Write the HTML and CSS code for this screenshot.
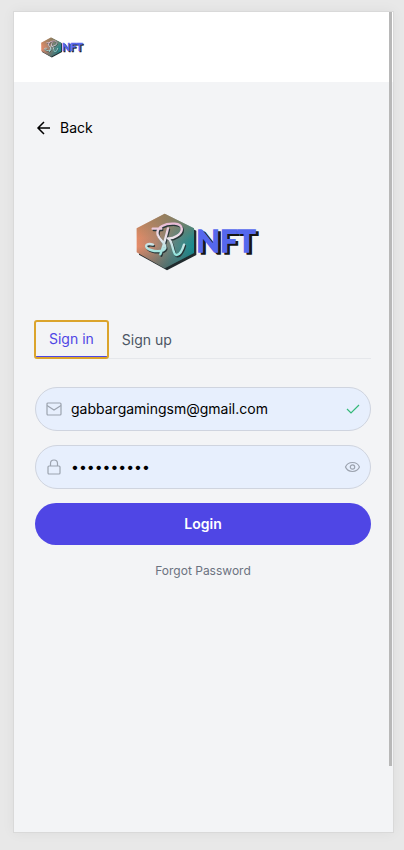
FILE: index.html
```html
<!DOCTYPE html>
<html lang="en">
<head>
  <meta charset="UTF-8" />
  <meta name="viewport" content="width=device-width, initial-scale=1.0" />
  <title>RNFT – Sign in</title>
  <link rel="stylesheet" href="styles.css">
</head>
<body>
  <!-- Logo, used in the header and above the form -->
  <svg class="defs" aria-hidden="true">
    <defs>
      <linearGradient id="hex-fill" x1="0" y1="0.4" x2="1" y2="0.6">
        <stop offset="0" stop-color="#ee8d68" />
        <stop offset="0.35" stop-color="#b58670" />
        <stop offset="0.65" stop-color="#5f8580" />
        <stop offset="1" stop-color="#168c91" />
      </linearGradient>
      <linearGradient id="hex-shade" x1="0" y1="0" x2="0" y2="1">
        <stop offset="0" stop-color="#8f7d58" stop-opacity="0.8" />
        <stop offset="0.45" stop-color="#8f7d58" stop-opacity="0.1" />
        <stop offset="0.6" stop-color="#34585c" stop-opacity="0" />
        <stop offset="1" stop-color="#34585c" stop-opacity="0.5" />
      </linearGradient>
      <linearGradient id="mark-stroke" gradientUnits="userSpaceOnUse" x1="0" y1="68" x2="0" y2="168">
        <stop offset="0" stop-color="#e9b9d4" />
        <stop offset="0.45" stop-color="#eee3ea" />
        <stop offset="1" stop-color="#8ee5dd" />
      </linearGradient>
      <symbol id="logo" viewBox="48 36 378 180">
        <path d="M141 47 229 92V165L141 211 57 164V92Z" fill="#202a2d" />
        <path d="M134 41 222 85V159L134 205 50 157V85Z" fill="url(#hex-fill)" />
        <path d="M134 41 222 85V159L134 205 50 157V85Z" fill="url(#hex-shade)" />
        <g fill="none" stroke-linecap="round" stroke-linejoin="round">
          <path stroke="#283639" stroke-width="7" transform="translate(3 4)" d="M98 86H124M144 85C138 109 130 142 121 163M113 104C108 80 137 69 164 71 191 73 192 96 170 108 160 114 150 116 144 115 160 122 157 164 169 165 178 165 187 151 192 134M113 104C119 122 138 129 136 144 131 157 96 156 81 144 73 135 84 129 99 134" />
          <path stroke="url(#mark-stroke)" stroke-width="7" d="M98 86H124M144 85C138 109 130 142 121 163M113 104C108 80 137 69 164 71 191 73 192 96 170 108 160 114 150 116 144 115 160 122 157 164 169 165 178 165 187 151 192 134M113 104C119 122 138 129 136 144 131 157 96 156 81 144 73 135 84 129 99 134" />
        </g>
        <text class="logo-shadow" x="237" y="163">NFT</text>
        <text class="logo-text" x="229" y="155">NFT</text>
      </symbol>
    </defs>
  </svg>

  <div class="screen">
    <header class="topbar">
      <svg class="logo-small" role="img" aria-label="RNFT"><use href="#logo" /></svg>
    </header>

    <main>
      <a class="back" href="#">
        <svg class="icon-back" viewBox="0 0 16 16" aria-hidden="true"><path d="M14 8H2M8 2 2 8l6 6" /></svg>
        Back
      </a>

      <svg class="logo-large" role="img" aria-label="RNFT"><use href="#logo" /></svg>

      <div class="tabs" role="tablist">
        <button class="tab active" type="button" role="tab" aria-selected="true">Sign in</button>
        <button class="tab" type="button" role="tab" aria-selected="false">Sign up</button>
      </div>

      <form class="login-form">
        <div class="field">
          <label for="email" aria-label="Email">
            <svg class="icon" viewBox="0 0 16 16"><rect x="1" y="2" width="14" height="12" rx="1" /><path d="M1 4.500 8 9l7-4.500" /></svg>
          </label>
          <input type="email" id="email" value="gabbargamingsm@gmail.com" />
          <svg class="icon check" viewBox="0 0 16 16" aria-hidden="true"><path d="m3 8 4 4 8-8" /></svg>
        </div>
        <div class="field">
          <label for="password" aria-label="Password">
            <svg class="icon" viewBox="0 0 16 16"><rect x="2" y="7" width="12" height="8" rx="1" /><path d="M4.500 7V4.500a3.500 3.500 0 0 1 7 0V7" /></svg>
          </label>
          <input type="password" id="password" value="gamingpass" />
          <button class="toggle" type="button" aria-label="Show password">
            <svg class="icon" viewBox="0 0 16 16"><path d="M1.500 8C4 2 13 2 15.500 8 13 14 4 14 1.500 8Z" /><circle cx="8.500" cy="8" r="2.200" /></svg>
          </button>
        </div>
        <button class="btn" type="submit">Login</button>
      </form>
      <a class="forgot" href="#">Forgot Password</a>
    </main>
    <div class="scrollbar"></div>
  </div>
</body>
</html>
```

FILE: styles.css
```css
:root {
  --primary: #4f46e5;
  --focus: #dba42c;
  --field: #e7effd;
  --border: #cfd4df;
  --icon: #9ca3af;
}
* { box-sizing: border-box; margin: 0; padding: 0; }
body {
  background: #e8e8e8;
  color: #000;
  font-family: Inter, sans-serif;
  font-size: 14px;
  line-height: 20px;
  padding: 11px 10px 17px 13px;
}
button, input { font: inherit; border: none; background: none; }
a { color: inherit; text-decoration: none; }
.defs { position: absolute; width: 0; height: 0; }

.screen {
  position: relative;
  min-height: calc(100vh - 28px);
  background: #f3f4f6;
  border: 1px solid #d9d9d9;
  box-shadow: 0 0 12px rgba(0,0,0,0.05);
}
.topbar {
  display: flex;
  align-items: center;
  height: 70px;
  padding: 0 27px;
  background: #fff;
}
main {
  display: flex;
  flex-direction: column;
  padding: 36px 22px 36px 21px;
}

/* Logo */
.logo-small { width: 44px; height: 21px; }
.logo-large { width: 126px; height: 60px; margin: 74px 8px 49px 0; align-self: center; }
.logo-text, .logo-shadow {
  font-family: Lato, sans-serif;
  font-size: 92px;
  font-weight: 700;
  stroke-width: 4px;
}
.logo-text { fill: #5568ee; stroke: #5568ee; }
.logo-shadow { fill: #151515; stroke: #151515; }

.back { display: flex; align-items: center; gap: 8px; align-self: flex-start; padding-left: 1px; }
.icon-back { width: 16px; height: 16px; fill: none; stroke: currentColor; stroke-width: 1.5; }

/* Tabs */
.tabs { display: flex; border-bottom: 1px solid #e5e7eb; }
.tab { height: 37px; padding: 0 14px; color: #4b5563; cursor: pointer; }
.tab.active {
  color: var(--primary);
  border-bottom: 2px solid var(--primary);
  border-radius: 2px;
  outline: 2px solid var(--focus);
  outline-offset: -1px;
  padding-top: 1px;
}

/* Form */
.login-form { display: flex; flex-direction: column; gap: 14px; margin-top: 28px; }
.field {
  display: flex;
  align-items: center;
  height: 44px;
  padding: 0 10px;
  background: var(--field);
  border: 1px solid var(--border);
  border-radius: 22px;
}
.field label, .toggle { display: flex; }
.field input { flex: 1; min-width: 0; padding: 0 9px; outline: none; }
.icon { width: 16px; height: 16px; flex: none; fill: none; stroke: var(--icon); stroke-width: 1.2; }
.check { stroke: #34b979; }
.btn {
  height: 42px;
  border-radius: 21px;
  background: var(--primary);
  color: #fff;
  font-weight: 600;
  cursor: pointer;
}
.forgot { align-self: center; margin-top: 16px; color: #6b7280; font-size: 12px; }

.scrollbar {
  position: absolute;
  top: 0;
  right: 1px;
  width: 3px;
  height: 92%;
  background: #b8b8b8;
}
```
